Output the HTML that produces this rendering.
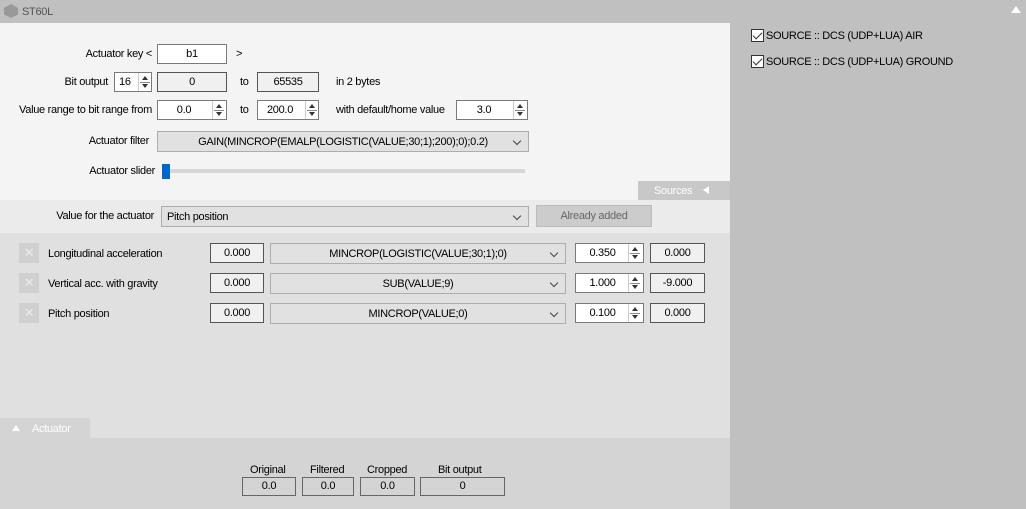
<!DOCTYPE html>
<html><head><style>
*{box-sizing:border-box;margin:0;padding:0}
body{width:1026px;height:509px;position:relative;overflow:hidden;font-family:"Liberation Sans",sans-serif;font-size:11px;letter-spacing:-0.3px;color:#000;background:#e0e0e0}
.a{position:absolute}
.t{position:absolute;white-space:nowrap;line-height:14px}
.r{position:absolute;white-space:nowrap;line-height:14px;text-align:right}
.box{position:absolute;border:1px solid #7a7a7a;background:#fff;text-align:center;line-height:18px;height:20px}
.ro{background:#f0f0f0;border-color:#555}
.spin{position:absolute;width:13px;border-left:1px solid #ccc;background:#fff}
.spin:before{content:"";position:absolute;left:3px;top:3px;border:3px solid transparent;border-bottom:4px solid #333;border-top:0}
.spin:after{content:"";position:absolute;left:3px;bottom:3px;border:3px solid transparent;border-top:4px solid #333;border-bottom:0}
.spin i{position:absolute;left:1px;right:1px;top:50%;border-top:1px solid #888}
.dd{position:absolute;border:1px solid #adadad;background:#e1e1e1;height:21px;line-height:20px;text-align:center}
.dd:after{content:"";position:absolute;right:8px;top:6px;width:5px;height:5px;border-right:1px solid #444;border-bottom:1px solid #444;transform:rotate(45deg)}
.x{position:absolute;width:20px;height:20px;background:#d0d0d0;color:#ececec;text-align:center;line-height:20px;font-size:13px}
.cb{position:absolute;width:13px;height:13px;border:1px solid #333;background:#fff}
.cb:after{content:"";position:absolute;left:3px;top:0px;width:4px;height:8px;border-right:1.5px solid #333;border-bottom:1.5px solid #333;transform:rotate(45deg)}
</style></head><body>
<div class="a" style="left:0;top:0;width:730px;height:23px;background:#c0c0c0"></div>
<div class="a" style="left:4px;top:4px;width:14px;height:14px;background:#999;clip-path:polygon(50% 0,100% 28%,100% 75%,50% 100%,0 75%,0 28%)"></div>
<div class="t" style="left:22px;top:5px;color:#555">ST60L</div>
<div class="a" style="left:730px;top:0;width:296px;height:509px;background:#c0c0c0"></div>
<div class="a" style="left:1011px;top:6px;border:5px solid transparent;border-bottom:7px solid #fff;border-top:0"></div>
<div class="cb" style="left:751px;top:29px"></div><div class="t" style="left:766px;top:29px">SOURCE :: DCS (UDP+LUA) AIR</div>
<div class="cb" style="left:751px;top:55px"></div><div class="t" style="left:766px;top:55px">SOURCE :: DCS (UDP+LUA) GROUND</div>

<div class="a" style="left:0;top:23px;width:730px;height:177px;background:#f4f4f4"></div>
<div class="r" style="right:874px;top:47px">Actuator key &lt;</div>
<div class="box" style="left:157px;top:44px;width:70px;line-height:18px">b1</div>
<div class="t" style="left:236px;top:47px">&gt;</div>
<div class="r" style="right:918px;top:75px">Bit output</div>
<div class="box" style="left:114px;top:72px;width:38px;text-align:left;padding-left:4px">16</div><div class="spin" style="left:138px;top:73px;height:18px"><i></i></div>
<div class="box ro" style="left:157px;top:72px;width:70px">0</div>
<div class="t" style="left:240px;top:75px">to</div>
<div class="box ro" style="left:257px;top:72px;width:62px">65535</div>
<div class="t" style="left:336px;top:75px">in 2 bytes</div>
<div class="r" style="right:874px;top:103px">Value range to bit range from</div>
<div class="box" style="left:157px;top:100px;width:70px;padding-right:16px">0.0</div><div class="spin" style="left:212px;top:101px;height:18px"><i></i></div>
<div class="t" style="left:240px;top:103px">to</div>
<div class="box" style="left:257px;top:100px;width:62px;padding-right:16px">200.0</div><div class="spin" style="left:305px;top:101px;height:18px"><i></i></div>
<div class="t" style="left:336px;top:103px">with default/home value</div>
<div class="box" style="left:456px;top:100px;width:72px;padding-right:16px">3.0</div><div class="spin" style="left:513px;top:101px;height:18px"><i></i></div>
<div class="r" style="right:877px;top:134px">Actuator filter</div>
<div class="dd" style="left:157px;top:131px;width:372px">GAIN(MINCROP(EMALP(LOGISTIC(VALUE;30;1);200);0);0.2)</div>
<div class="r" style="right:871px;top:164px">Actuator slider</div>
<div class="a" style="left:163px;top:169px;width:362px;height:4px;background:#d6d6d6"></div>
<div class="a" style="left:162px;top:164px;width:8px;height:15px;background:#0066cc"></div>
<div class="a" style="left:638px;top:181px;width:92px;height:19px;background:#c8c8c8"></div>
<div class="t" style="left:654px;top:184px;color:#fff">Sources</div>
<div class="a" style="left:703px;top:186px;border:4px solid transparent;border-right:6px solid #fff;border-left:0"></div>

<div class="a" style="left:0;top:200px;width:730px;height:33px;background:#ebebeb"></div>
<div class="r" style="right:872px;top:209px">Value for the actuator</div>
<div class="dd" style="left:161px;top:206px;width:368px;text-align:left;padding-left:5px">Pitch position</div>
<div class="a" style="left:536px;top:205px;width:116px;height:22px;background:#cccccc;border:1px solid #bbb;color:#666;text-align:center;line-height:20px">Already added</div>

<div class="x" style="left:19px;top:243px">✕</div><div class="t" style="left:48px;top:247px">Longitudinal acceleration</div>
<div class="box ro" style="left:210px;top:243px;width:54px">0.000</div>
<div class="dd" style="left:270px;top:243px;width:296px">MINCROP(LOGISTIC(VALUE;30;1);0)</div>
<div class="box" style="left:575px;top:243px;width:69px;padding-right:14px">0.350</div><div class="spin" style="left:628px;top:244px;height:18px"><i></i></div>
<div class="box ro" style="left:650px;top:243px;width:55px">0.000</div>

<div class="x" style="left:19px;top:273px">✕</div><div class="t" style="left:48px;top:277px">Vertical acc. with gravity</div>
<div class="box ro" style="left:210px;top:273px;width:54px">0.000</div>
<div class="dd" style="left:270px;top:273px;width:296px">SUB(VALUE;9)</div>
<div class="box" style="left:575px;top:273px;width:69px;padding-right:14px">1.000</div><div class="spin" style="left:628px;top:274px;height:18px"><i></i></div>
<div class="box ro" style="left:650px;top:273px;width:55px">-9.000</div>

<div class="x" style="left:19px;top:303px">✕</div><div class="t" style="left:48px;top:307px">Pitch position</div>
<div class="box ro" style="left:210px;top:303px;width:54px">0.000</div>
<div class="dd" style="left:270px;top:303px;width:296px">MINCROP(VALUE;0)</div>
<div class="box" style="left:575px;top:303px;width:69px;padding-right:14px">0.100</div><div class="spin" style="left:628px;top:304px;height:18px"><i></i></div>
<div class="box ro" style="left:650px;top:303px;width:55px">0.000</div>

<div class="a" style="left:0;top:418px;width:90px;height:20px;background:#d4d4d4"></div>
<div class="a" style="left:12px;top:425px;border:4px solid transparent;border-bottom:6px solid #fff;border-top:0"></div>
<div class="t" style="left:32px;top:422px;color:#fff">Actuator</div>
<div class="a" style="left:0;top:438px;width:730px;height:71px;background:#d4d4d4"></div>
<div class="t" style="left:250px;top:463px">Original</div>
<div class="t" style="left:310px;top:463px">Filtered</div>
<div class="t" style="left:367px;top:463px">Cropped</div>
<div class="t" style="left:438px;top:463px">Bit output</div>
<div class="box" style="left:242px;top:477px;width:54px;background:#d4d4d4;border-color:#666;height:19px;line-height:17px">0.0</div>
<div class="box" style="left:302px;top:477px;width:52px;background:#d4d4d4;border-color:#666;height:19px;line-height:17px">0.0</div>
<div class="box" style="left:360px;top:477px;width:55px;background:#d4d4d4;border-color:#666;height:19px;line-height:17px">0.0</div>
<div class="box" style="left:420px;top:477px;width:85px;background:#d4d4d4;border-color:#666;height:19px;line-height:17px">0</div>
</body></html>
